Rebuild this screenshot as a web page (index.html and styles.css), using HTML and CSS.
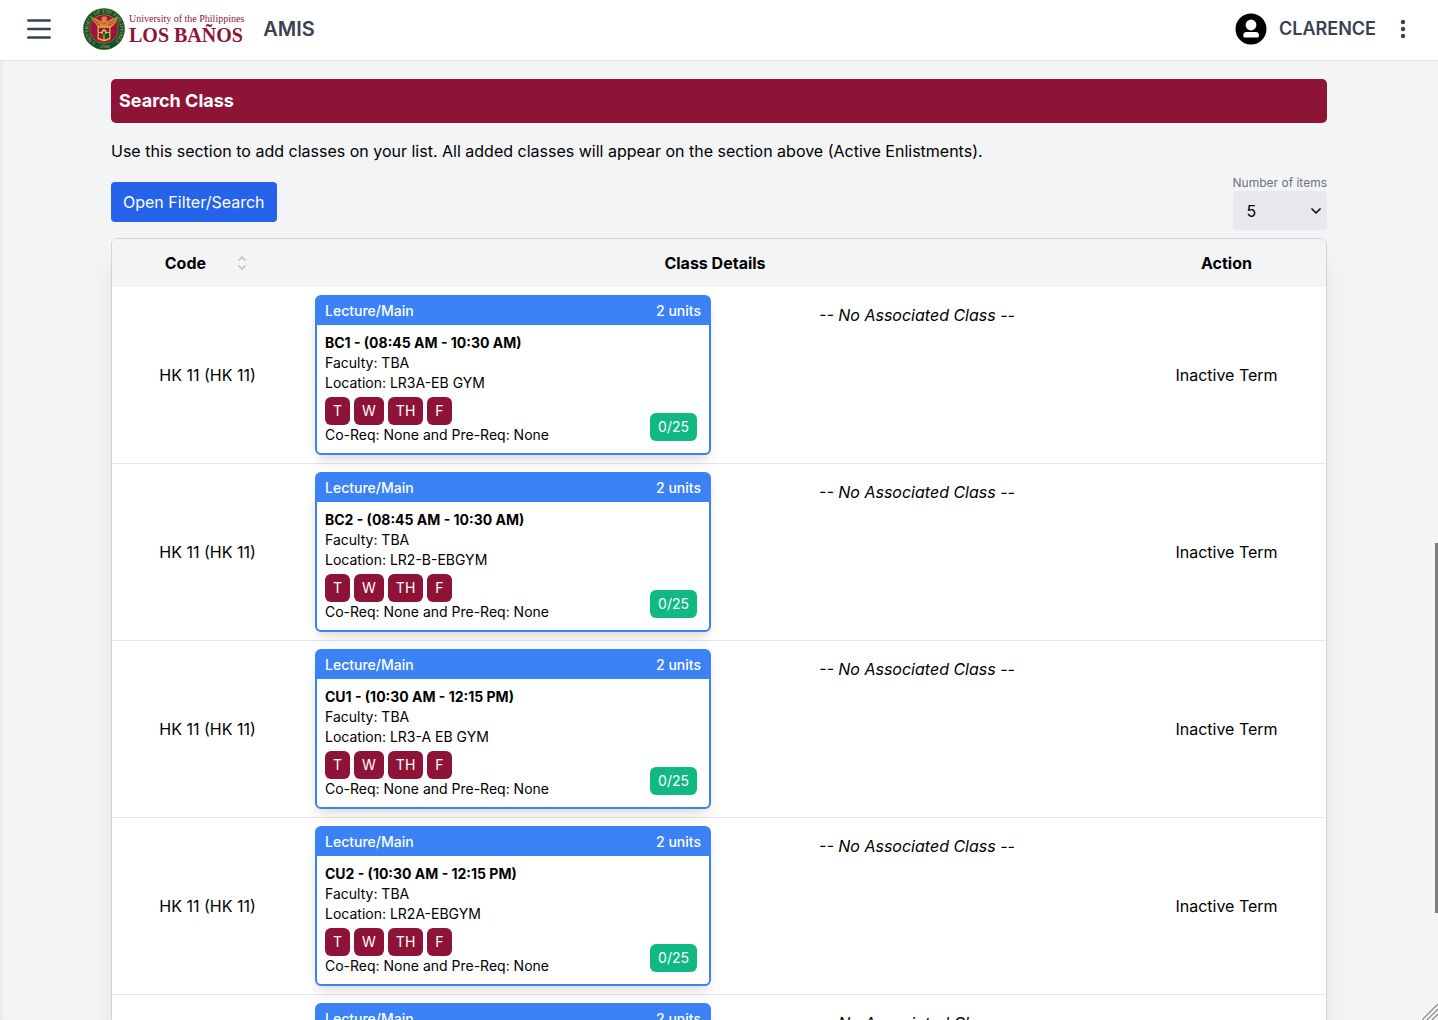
FILE: index.html
```html
<!DOCTYPE html>
<html lang="en">
<head>
<meta charset="utf-8">
<meta name="viewport" content="width=device-width, initial-scale=1">
<title>AMIS</title>
<link rel="stylesheet" href="styles.css">
</head>
<body>
<div class="app">
  <header class="topbar">
    <button class="icon-btn menu-btn" type="button" aria-label="Menu">
      <svg width="24" height="20" viewBox="0 0 24 20" fill="none" stroke="currentColor" stroke-width="2.5" stroke-linecap="round"><path d="M1.300 1.500h21.400M1.300 10h21.400M1.300 18.500h21.400"/></svg>
    </button>
    <a class="brand" href="#">
      <svg class="seal" width="42" height="42" viewBox="0 0 42 42" aria-hidden="true">
        <defs>
          <path id="ring" d="M21 37A16 16 0 1 1 21.100 37"/>
        </defs>
        <circle cx="21" cy="21" r="21" fill="#b99a3c"/>
        <circle cx="21" cy="21" r="20.600" fill="#0b5135"/>
        <circle cx="21" cy="21" r="14.400" fill="#c49a38"/>
        <circle cx="21" cy="21" r="14" fill="#981638"/>
        <text class="seal-text"><textPath href="#ring" startOffset="9">UNIVERSITY OF THE PHILIPPINES</textPath><tspan x="16.500" y="39.500">1908</tspan></text>
        <path d="M7.500 9.500l5 .8 5 2.700 1.500-1-1-1.500 1.800-2h3l1.400 1.500-.6 2.500 1 .5 5-2.700 5-.8-1.500 4.500-3 4-3.500 2.500h-9.200l-3.500-2.500-3-4z" fill="#d9803a"/>
        <path d="M9.500 11.500l7 3.500M11 14.500l6 3M32.500 11.500l-7 3.500M31 14.500l-6 3M18.500 14l2.500 2.500 2.500-2.500" stroke="#a8352e" stroke-width=".8" fill="none"/>
        <path d="M14.500 18.500h13v12.500q-3 1.500-6.500 2.500-3.500-1-6.500-2.500z" fill="#dcb648"/>
        <path d="M15.800 19.800h10.400v4.200H15.800z" fill="#981638"/>
        <path d="M15.800 25h4.600v6.500l-4.600-1.500z" fill="#981638"/>
        <path d="M21.600 25h4.600v5l-4.600 1.500z" fill="#0b5135"/>
        <path d="M18.500 26v-3l2.500-2.500 2.500 2.500v3z" fill="#dcb648"/>
        <path d="M20 23.500h2v3h-2z" fill="#0b5135"/>
      </svg>
      <span class="brand-name">
        <span class="brand-top">University of the Philippines</span>
        <span class="brand-main">LOS BAÑOS</span>
      </span>
    </a>
    <span class="app-name">AMIS</span>
    <div class="account">
      <svg width="32" height="32" viewBox="0 0 32 32" aria-hidden="true"><circle cx="16" cy="16" r="15.500" fill="#000"/><circle cx="16" cy="12" r="5.400" fill="#fff"/><path d="M8.300 22.300q0-3.300 3.300-3.300h9q3.300 0 3.300 3.300v.8q0 1.500-1.500 1.500H9.800q-1.500 0-1.500-1.500z" fill="#fff"/></svg>
      <span class="user-name">CLARENCE</span>
      <button class="icon-btn" type="button" aria-label="More options">
        <svg width="6" height="20" viewBox="0 0 6 20" fill="currentColor"><circle cx="3" cy="3" r="2.200"/><circle cx="3" cy="10" r="2.200"/><circle cx="3" cy="17" r="2.200"/></svg>
      </button>
    </div>
  </header>

  <main class="page">
    <div class="container">
      <h1 class="section-title">Search Class</h1>
      <p class="intro">Use this section to add classes on your list. All added classes will appear on the section above (Active Enlistments).</p>
      <div class="toolbar">
        <button class="filter-btn" type="button">Open Filter/Search</button>
        <div class="items">
          <label for="item-count">Number of items</label>
          <div class="select-wrap">
            <select id="item-count"><option>5</option><option>10</option><option>20</option></select>
            <svg class="chevron" width="10" height="6" viewBox="0 0 10 6" fill="none" stroke="#111" stroke-width="1.700" stroke-linecap="round" stroke-linejoin="round"><path d="M1 1l4 4 4-4"/></svg>
          </div>
        </div>
      </div>

      <div class="table-box">
        <table class="classes">
          <thead>
            <tr>
              <th class="col-code" scope="col"><div class="sortable"><span>Code</span>
                <svg width="8" height="14" viewBox="0 0 8 14" fill="none" stroke="#c8c9cb" stroke-width="1.800" stroke-linecap="round" stroke-linejoin="round"><path d="M1 4l3-3 3 3M1 10l3 3 3-3"/></svg></div></th>
              <th class="col-details" scope="col">Class Details</th>
              <th class="col-action" scope="col">Action</th>
            </tr>
          </thead>
          <tbody>
            <tr>
              <td>HK 11 (HK 11)</td>
              <td class="details"><div class="pair">
                <article class="card">
                  <div class="card-head"><span>Lecture/Main</span><span>2 units</span></div>
                  <div class="card-body">
                    <div class="info"><strong>BC1 - (08:45 AM - 10:30 AM)</strong><span>Faculty: TBA</span><span>Location: LR3A-EB GYM</span>
                      <div class="days"><span>T</span><span>W</span><span>TH</span><span>F</span></div>
                      <span>Co-Req: None and Pre-Req: None</span></div>
                    <span class="slots">0/25</span>
                  </div>
                </article>
                <em class="none">-- No Associated Class --</em>
              </div></td>
              <td>Inactive Term</td>
            </tr>
            <tr>
              <td>HK 11 (HK 11)</td>
              <td class="details"><div class="pair">
                <article class="card">
                  <div class="card-head"><span>Lecture/Main</span><span>2 units</span></div>
                  <div class="card-body">
                    <div class="info"><strong>BC2 - (08:45 AM - 10:30 AM)</strong><span>Faculty: TBA</span><span>Location: LR2-B-EBGYM</span>
                      <div class="days"><span>T</span><span>W</span><span>TH</span><span>F</span></div>
                      <span>Co-Req: None and Pre-Req: None</span></div>
                    <span class="slots">0/25</span>
                  </div>
                </article>
                <em class="none">-- No Associated Class --</em>
              </div></td>
              <td>Inactive Term</td>
            </tr>
            <tr>
              <td>HK 11 (HK 11)</td>
              <td class="details"><div class="pair">
                <article class="card">
                  <div class="card-head"><span>Lecture/Main</span><span>2 units</span></div>
                  <div class="card-body">
                    <div class="info"><strong>CU1 - (10:30 AM - 12:15 PM)</strong><span>Faculty: TBA</span><span>Location: LR3-A EB GYM</span>
                      <div class="days"><span>T</span><span>W</span><span>TH</span><span>F</span></div>
                      <span>Co-Req: None and Pre-Req: None</span></div>
                    <span class="slots">0/25</span>
                  </div>
                </article>
                <em class="none">-- No Associated Class --</em>
              </div></td>
              <td>Inactive Term</td>
            </tr>
            <tr>
              <td>HK 11 (HK 11)</td>
              <td class="details"><div class="pair">
                <article class="card">
                  <div class="card-head"><span>Lecture/Main</span><span>2 units</span></div>
                  <div class="card-body">
                    <div class="info"><strong>CU2 - (10:30 AM - 12:15 PM)</strong><span>Faculty: TBA</span><span>Location: LR2A-EBGYM</span>
                      <div class="days"><span>T</span><span>W</span><span>TH</span><span>F</span></div>
                      <span>Co-Req: None and Pre-Req: None</span></div>
                    <span class="slots">0/25</span>
                  </div>
                </article>
                <em class="none">-- No Associated Class --</em>
              </div></td>
              <td>Inactive Term</td>
            </tr>
            <tr>
              <td></td>
              <td class="details"><div class="pair">
                <article class="card">
                  <div class="card-head"><span>Lecture/Main</span><span>2 units</span></div>
                  <div class="card-body"></div>
                </article>
                <em class="none">-- No Associated Class --</em>
              </div></td>
              <td></td>
            </tr>
          </tbody>
        </table>
      </div>
    </div>
  </main>
  <div class="scroll-thumb"></div>
  <svg class="grip" width="16" height="16" viewBox="0 0 16 16" fill="none" stroke="#8e9192" stroke-width="1.300" aria-hidden="true"><path d="M0 16L16 0M5 16L16 5M10 16l6-6"/></svg>
</div>
</body>
</html>
```
FILE: styles.css
```css
*, *::before, *::after { box-sizing: border-box; }

body {
  margin: 0;
  font-family: Inter, "Liberation Sans", sans-serif;
  font-size: 16px;
  line-height: 24px;
  color: #000;
  background: #f3f4f6;
}

button, select { font: inherit; }

.app {
  display: flex;
  flex-direction: column;
  height: 100vh;
  overflow: hidden;
}

/* Top bar */
.topbar {
  display: flex;
  flex: none;
  align-items: center;
  padding: 8px 32px 10px 27px;
  background: #fff;
  border-bottom: 1px solid #e2e4e8;
  color: #374151;
}

.icon-btn {
  display: flex;
  padding: 0;
  border: 0;
  background: none;
  color: inherit;
  cursor: pointer;
}

.menu-btn { margin-right: 32px; }

.brand {
  display: flex;
  align-items: center;
  gap: 4px;
  color: #8d1436;
  text-decoration: none;
  font-family: "Liberation Serif", "Times New Roman", serif;
}

.seal-text {
  font-size: 5px;
  fill: #d6b04a;
}

.brand-name {
  display: flex;
  flex-direction: column;
  white-space: nowrap;
}

.brand-top { font-size: 10px; line-height: 12px; }

.brand-main { font-size: 20px; line-height: 20px; font-weight: 700; }

.app-name {
  margin-left: 19px;
  font-size: 20px;
  font-weight: 600;
}

.account {
  display: flex;
  align-items: center;
  gap: 12px;
  margin-left: auto;
}

.user-name {
  margin-right: 12px;
  font-size: 18px;
  font-weight: 600;
}

/* Page */
.page {
  flex: 1;
  min-height: 0;
  overflow: hidden;
  box-shadow: inset 4px 0 4px -3px #e3e4e6;
}

.container {
  max-width: 1280px;
  margin: 0 auto;
  padding: 18px 32px;
}

.section-title {
  margin: 0;
  padding: 8px;
  border-radius: 5px;
  background: #8d1436;
  color: #fff;
  font-size: 18px;
  line-height: 28px;
  font-weight: 700;
}

.intro { margin: 16px 0 12px; }

.toolbar {
  display: flex;
  align-items: flex-end;
  justify-content: space-between;
  margin-bottom: 8px;
}

.filter-btn {
  margin-bottom: 8px;
  padding: 8px 12px;
  border: 0;
  border-radius: 4px;
  background: #2563eb;
  color: #fff;
}

.items { display: flex; flex-direction: column; }

.items label {
  font-size: 12px;
  line-height: 16px;
  color: #6b7280;
}

.select-wrap { position: relative; }

.select-wrap select {
  appearance: none;
  display: block;
  width: 100%;
  height: 39px;
  padding: 0 14px;
  border: 0;
  border-radius: 4px;
  background: #e8e7eb;
  color: #000;
}

.chevron {
  position: absolute;
  right: 6px;
  top: 17px;
  pointer-events: none;
}

/* Table */
.table-box {
  overflow: hidden;
  border: 1px solid #d1d5db;
  border-radius: 6px;
  background: #fff;
  box-shadow: 0 20px 25px -5px rgba(0, 0, 0, .1), 0 10px 10px -5px rgba(0, 0, 0, .04);
}

.classes {
  width: 100%;
  table-layout: fixed;
  border-collapse: separate;
  border-spacing: 0;
  text-align: center;
}

.classes th {
  padding: 12px;
  background: #f3f4f6;
  font-weight: 700;
}

.col-code { width: 191px; }
.col-action { width: 199px; }

.sortable {
  display: flex;
  align-items: center;
  justify-content: flex-end;
  gap: 32px;
  padding-right: 45px;
}

.classes td {
  padding: 8px 12px;
  border-bottom: 1px solid #e5e7eb;
}

.pair {
  display: grid;
  grid-template-columns: 1fr 1fr;
  gap: 8px;
}

.card {
  border: 2px solid #3b82f6;
  border-radius: 6px;
  background: #fff;
  box-shadow: 0 10px 15px -3px rgba(0, 0, 0, .1), 0 4px 6px -2px rgba(0, 0, 0, .05);
  font-size: 14px;
  line-height: 20px;
  text-align: left;
}

.card-head {
  display: flex;
  justify-content: space-between;
  padding: 4px 8px;
  background: #3b82f6;
  color: #fff;
  font-weight: 500;
}

.card-body {
  display: flex;
  align-items: flex-end;
  justify-content: space-between;
  min-height: 128px;
  padding: 8px;
}

.info { display: flex; flex-direction: column; }

.days {
  display: flex;
  gap: 4px;
  margin-top: 4px;
}

.days span, .slots {
  padding: 4px 8px;
  border-radius: 6px;
  background: #8d1436;
  color: #fff;
}

.slots {
  margin: 0 4px 4px;
  background: #10b981;
}

.none { padding-top: 8px; }

/* Scroll indicator and resize grip laid over the page corner */
.scroll-thumb {
  position: fixed;
  right: 0;
  top: 53.2%;
  width: 3px;
  height: 36.3%;
  background: #7d7e80;
}

.grip {
  position: fixed;
  right: 0;
  bottom: 0;
}
```
